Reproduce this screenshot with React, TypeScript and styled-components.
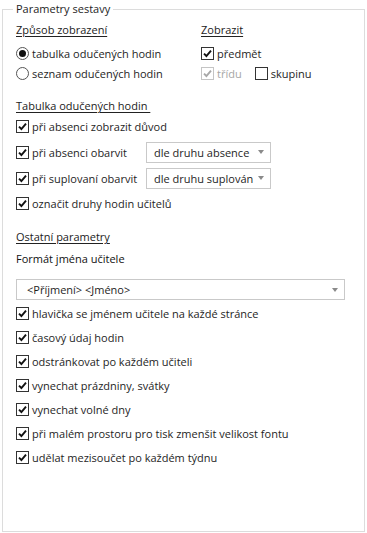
import React from "react";
import styled, { createGlobalStyle } from "styled-components";

const Global = createGlobalStyle`
  html, body { margin: 0; padding: 0; background: #ffffff; }
  body { font-family: "Open Sans", "Noto Sans", sans-serif; font-size: 11px; color: #1e1e1e; }
  #root { width: 367px; height: 533px; }
`;

const Fieldset = styled.fieldset`
  box-sizing: border-box;
  margin: 0 2px 0 2px;
  height: 532px;
  border: 1px solid #dcdcdc;
  padding: 2px 14px 0 13px;
`;

const Legend = styled.legend`
  margin-left: -3px;
  padding: 0 3px 0 3px;
  line-height: 18px;
  font-size: 11px;
  color: #1e1e1e;
`;

const TopGrid = styled.div`
  display: grid;
  grid-template-columns: 185px 1fr;
`;

const Column = styled.div<{ $mt?: number }>`
  display: flex;
  flex-direction: column;
  margin-top: ${(p) => p.$mt ?? 0}px;
`;

const Heading = styled.div<{ $mt?: number; $mb?: number }>`
  line-height: 16px;
  margin-top: ${(p) => p.$mt ?? 0}px;
  margin-bottom: ${(p) => p.$mb ?? 0}px;
  color: #222;
  text-decoration: underline;
  text-underline-offset: 2px;
  text-decoration-thickness: 1px;
  white-space: pre;
`;

const Label = styled.div<{ $mt?: number; $mb?: number }>`
  line-height: 16px;
  margin-top: ${(p) => p.$mt ?? 0}px;
  margin-bottom: ${(p) => p.$mb ?? 0}px;
  color: #111;
`;

const Row = styled.div<{ $h: number }>`
  display: flex;
  align-items: center;
  height: ${(p) => p.$h}px;
  white-space: nowrap;
`;

const Inline = styled.div<{ $ml?: number }>`
  display: flex;
  align-items: center;
  margin-left: ${(p) => p.$ml ?? 0}px;
`;

const BoxWrap = styled.span<{ $disabled?: boolean }>`
  box-sizing: border-box;
  width: 13px;
  height: 13px;
  flex: none;
  border: 1px solid ${(p) => (p.$disabled ? "#c4c4c4" : "#333333")};
  background: #fff;
  display: inline-flex;
  align-items: center;
  justify-content: center;
  margin-right: 3px;
`;

const RadioWrap = styled.span`
  box-sizing: border-box;
  width: 13px;
  height: 13px;
  flex: none;
  border-radius: 50%;
  border: 1px solid #555;
  background: #fff;
  display: inline-flex;
  align-items: center;
  justify-content: center;
  margin-right: 3px;
`;

const Dot = styled.span`
  width: 7px;
  height: 7px;
  border-radius: 50%;
  background: #111;
`;

const Text = styled.span<{ $disabled?: boolean }>`
  color: ${(p) => (p.$disabled ? "#a6a6a6" : "#1e1e1e")};
`;

const Combo = styled.div<{ $w?: number }>`
  box-sizing: border-box;
  height: 21px;
  width: ${(p) => (p.$w ? `${p.$w}px` : "auto")};
  border: 1px solid #c9c9c9;
  background: #fff;
  display: flex;
  align-items: center;
  justify-content: space-between;
  padding: 0 6px 0 7px;
  color: #1e1e1e;
`;

const FullCombo = styled(Combo)`
  padding-left: 10px;
  margin-right: 5px;
`;

const Arrow = styled.span`
  width: 0;
  height: 0;
  border-left: 3.5px solid transparent;
  border-right: 3.5px solid transparent;
  border-top: 4px solid #8a8a8a;
  flex: none;
`;

const CheckRowLabel = styled.div`
  display: flex;
  align-items: center;
  width: 130px;
`;

function Check({ disabled }: { disabled?: boolean }) {
  return (
    <BoxWrap $disabled={disabled}>
      <svg width="9" height="9" viewBox="0 0 9 9">
        <path
          d="M1 4.6 L3.4 7 L8 1.6"
          fill="none"
          stroke={disabled ? "#a8a8a8" : "#111"}
          strokeWidth="1.9"
        />
      </svg>
    </BoxWrap>
  );
}

function EmptyBox() {
  return <BoxWrap />;
}

function Radio({ on }: { on?: boolean }) {
  return <RadioWrap>{on && <Dot />}</RadioWrap>;
}

const otherOptions = [
  "hlavička se jménem učitele na každé stránce",
  "časový údaj hodin",
  "odstránkovat po každém učiteli",
  "vynechat prázdniny, svátky",
  "vynechat volné dny",
  "při malém prostoru pro tisk zmenšit velikost fontu",
  "udělat mezisoučet po každém týdnu",
];

export default function App() {
  return (
    <>
      <Global />
      <Fieldset>
        <Legend>Parametry sestavy</Legend>
        <TopGrid>
          <Column>
            <Heading $mt={2} $mb={5}>Způsob zobrazení</Heading>
            <Row $h={20}>
              <Radio on />
              <Text>tabulka odučených hodin</Text>
            </Row>
            <Row $h={20}>
              <Radio />
              <Text>seznam odučených hodin</Text>
            </Row>
          </Column>
          <Column>
            <Heading $mt={2} $mb={5}>Zobrazit</Heading>
            <Row $h={20}>
              <Check />
              <Text>předmět</Text>
            </Row>
            <Row $h={20}>
              <Inline>
                <Check disabled />
                <Text $disabled>třídu</Text>
              </Inline>
              <Inline $ml={13}>
                <EmptyBox />
                <Text>skupinu</Text>
              </Inline>
            </Row>
          </Column>
        </TopGrid>

        <Heading $mt={15} $mb={0}>{"Tabulka odučených hodin "}</Heading>
        <Row $h={25}>
          <Check />
          <Text>při absenci zobrazit důvod</Text>
        </Row>
        <Row $h={26}>
          <CheckRowLabel>
            <Check />
            <Text>při absenci obarvit</Text>
          </CheckRowLabel>
          <Combo $w={125}>
            <span>dle druhu absence</span>
            <Arrow />
          </Combo>
        </Row>
        <Row $h={26}>
          <CheckRowLabel>
            <Check />
            <Text>při suplovaní obarvit</Text>
          </CheckRowLabel>
          <Combo $w={125}>
            <span>dle druhu suplován</span>
            <Arrow />
          </Combo>
        </Row>
        <Row $h={25}>
          <Check />
          <Text>označit druhy hodin učitelů</Text>
        </Row>

        <Heading $mt={13} $mb={6}>Ostatní parametry</Heading>
        <Label $mb={12}>Formát jména učitele</Label>
        <FullCombo>
          <span>{"<Příjmení> <Jméno>"}</span>
          <Arrow />
        </FullCombo>
        <Column $mt={1}>
          {otherOptions.map((o) => (
            <Row $h={24} key={o}>
              <Check />
              <Text>{o}</Text>
            </Row>
          ))}
        </Column>
      </Fieldset>
    </>
  );
}
